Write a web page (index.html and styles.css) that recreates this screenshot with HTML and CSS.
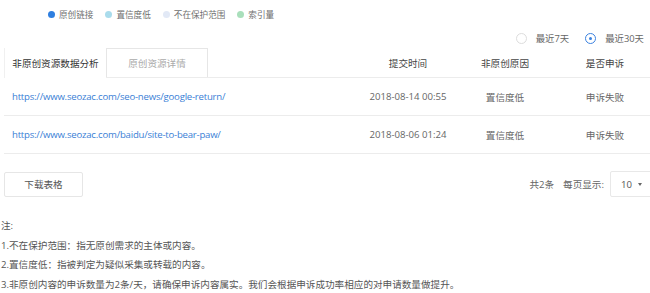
FILE: index.html
```html
<!DOCTYPE html>
<html lang="zh">
<head>
<meta charset="utf-8">
<link rel="stylesheet" href="styles.css">
</head>
<body>
<div class="page">
  <div class="legend">
    <span class="lg"><i class="dot d1"></i>原创链接</span>
    <span class="lg"><i class="dot d2"></i>置信度低</span>
    <span class="lg"><i class="dot d3"></i>不在保护范围</span>
    <span class="lg"><i class="dot d4"></i>索引量</span>
  </div>
  <div class="radios">
    <label class="radio"><i class="rc"></i>最近7天</label>
    <label class="radio on"><i class="rc"></i>最近30天</label>
  </div>
  <div class="table">
    <div class="row head">
      <div class="tabs">
        <div class="tab active">非原创资源数据分析</div>
        <div class="tab">原创资源详情</div>
      </div>
      <div class="c">提交时间</div>
      <div class="c">非原创原因</div>
      <div class="c">是否申诉</div>
    </div>
    <div class="row body">
      <div class="url">https://www.seozac.com/seo-news/google-return/</div>
      <div class="c">2018-08-14 00:55</div>
      <div class="c">置信度低</div>
      <div class="c">申诉失败</div>
    </div>
    <div class="row body">
      <div class="url">https://www.seozac.com/baidu/site-to-bear-paw/</div>
      <div class="c">2018-08-06 01:24</div>
      <div class="c">置信度低</div>
      <div class="c">申诉失败</div>
    </div>
  </div>
  <div class="footer">
    <div class="btn">下载表格</div>
    <div class="pager">
      <span class="total">共2条</span>
      <span class="per">每页显示:</span>
      <div class="select">10 <i class="caret"></i></div>
    </div>
  </div>
</div>
<div class="notes">
  <p>注:</p>
  <p>1.不在保护范围：指无原创需求的主体或内容。</p>
  <p>2.置信度低：指被判定为疑似采集或转载的内容。</p>
  <p>3.非原创内容的申诉数量为2条/天，请确保申诉内容属实。我们会根据申诉成功率相应的对申请数量做提升。</p>
</div>
</body>
</html>
```
FILE: styles.css
```css
html, body {
  margin: 0;
  padding: 0;
  background: #fff;
  overflow: hidden;
}
body {
  width: 650px;
  height: 293px;
  font-family: "Open Sans", "Noto Sans CJK SC", sans-serif;
  font-size: 9.6px;
  color: #555;
}
.page {
  margin-left: 4px;
  width: 656px;
}
.legend {
  height: 28px;
  display: flex;
  align-items: center;
  padding-left: 44px;
  gap: 12px;
  font-size: 8.6px;
  color: #6f6f6f;
}
.lg {
  display: flex;
  align-items: center;
}
.dot {
  width: 7px;
  height: 7px;
  border-radius: 50%;
  margin-right: 4px;
}
.d1 { background: #2f7fe0; }
.d2 { background: #aadcec; }
.d3 { background: #e2e9f6; }
.d4 { background: #a9dfbb; }
.radios {
  height: 20px;
  display: flex;
  justify-content: flex-end;
  align-items: center;
  padding-right: 16px;
  gap: 16px;
  color: #666;
  font-size: 9.4px;
}
.radio {
  display: flex;
  align-items: center;
  gap: 9px;
}
.rc {
  width: 9px;
  height: 9px;
  border: 1px solid #ddd;
  border-radius: 50%;
  box-sizing: content-box;
  position: relative;
}
.radio.on .rc {
  border-color: #3b82e0;
}
.radio.on .rc::after {
  content: "";
  position: absolute;
  left: 3px;
  top: 3px;
  width: 3px;
  height: 3px;
  border-radius: 50%;
  background: #3b82e0;
}
.row {
  display: grid;
  grid-template-columns: 362px 84px 110px 100px;
  align-items: center;
  border-bottom: 1px solid #ececec;
}
.row .c {
  text-align: center;
}
.head {
  height: 29px;
  color: #444;
  align-items: stretch;
}
.head .c {
  display: flex;
  align-items: center;
  justify-content: center;
}
.head > .c:last-child {
  padding-right: 10px;
}
.body > .c:last-child {
  padding-right: 10px;
}
.tabs {
  display: flex;
}
.tab {
  width: 102px;
  display: flex;
  align-items: center;
  justify-content: center;
  box-sizing: border-box;
}
.tab.active {
  color: #333;
  border-left: 1px solid #f0f0f0;
  margin-bottom: -1px;
  background: #fff;
  position: relative;
}
.tab:not(.active) {
  border: 1px solid #e6e6e6;
  border-bottom: none;
  color: #aaa;
}
.body {
  height: 37px;
  color: #666;
}
.url {
  padding-left: 8px;
  color: #3a80d6;
  letter-spacing: -0.22px;
}
.footer {
  margin-top: 17px;
  display: flex;
  justify-content: space-between;
  align-items: center;
}
.btn {
  width: 79px;
  height: 25px;
  box-sizing: border-box;
  border: 1px solid #e6e6e6;
  border-radius: 2px;
  display: flex;
  align-items: center;
  justify-content: center;
  color: #555;
}
.pager {
  display: flex;
  align-items: center;
  color: #666;
}
.per {
  margin-left: 9px;
  margin-right: 6px;
}
.select {
  width: 50px;
  height: 26px;
  box-sizing: border-box;
  border: 1px solid #e8e8e8;
  border-radius: 2px;
  display: flex;
  align-items: center;
  padding-left: 10px;
  color: #555;
}
.caret {
  margin-left: 6px;
  width: 0;
  height: 0;
  border-left: 2.5px solid transparent;
  border-right: 2.5px solid transparent;
  border-top: 3px solid #666;
}
.notes {
  margin-top: 19px;
  padding-left: 1px;
  color: #555;
}
.notes p {
  margin: 0;
  line-height: 19.5px;
}
```
